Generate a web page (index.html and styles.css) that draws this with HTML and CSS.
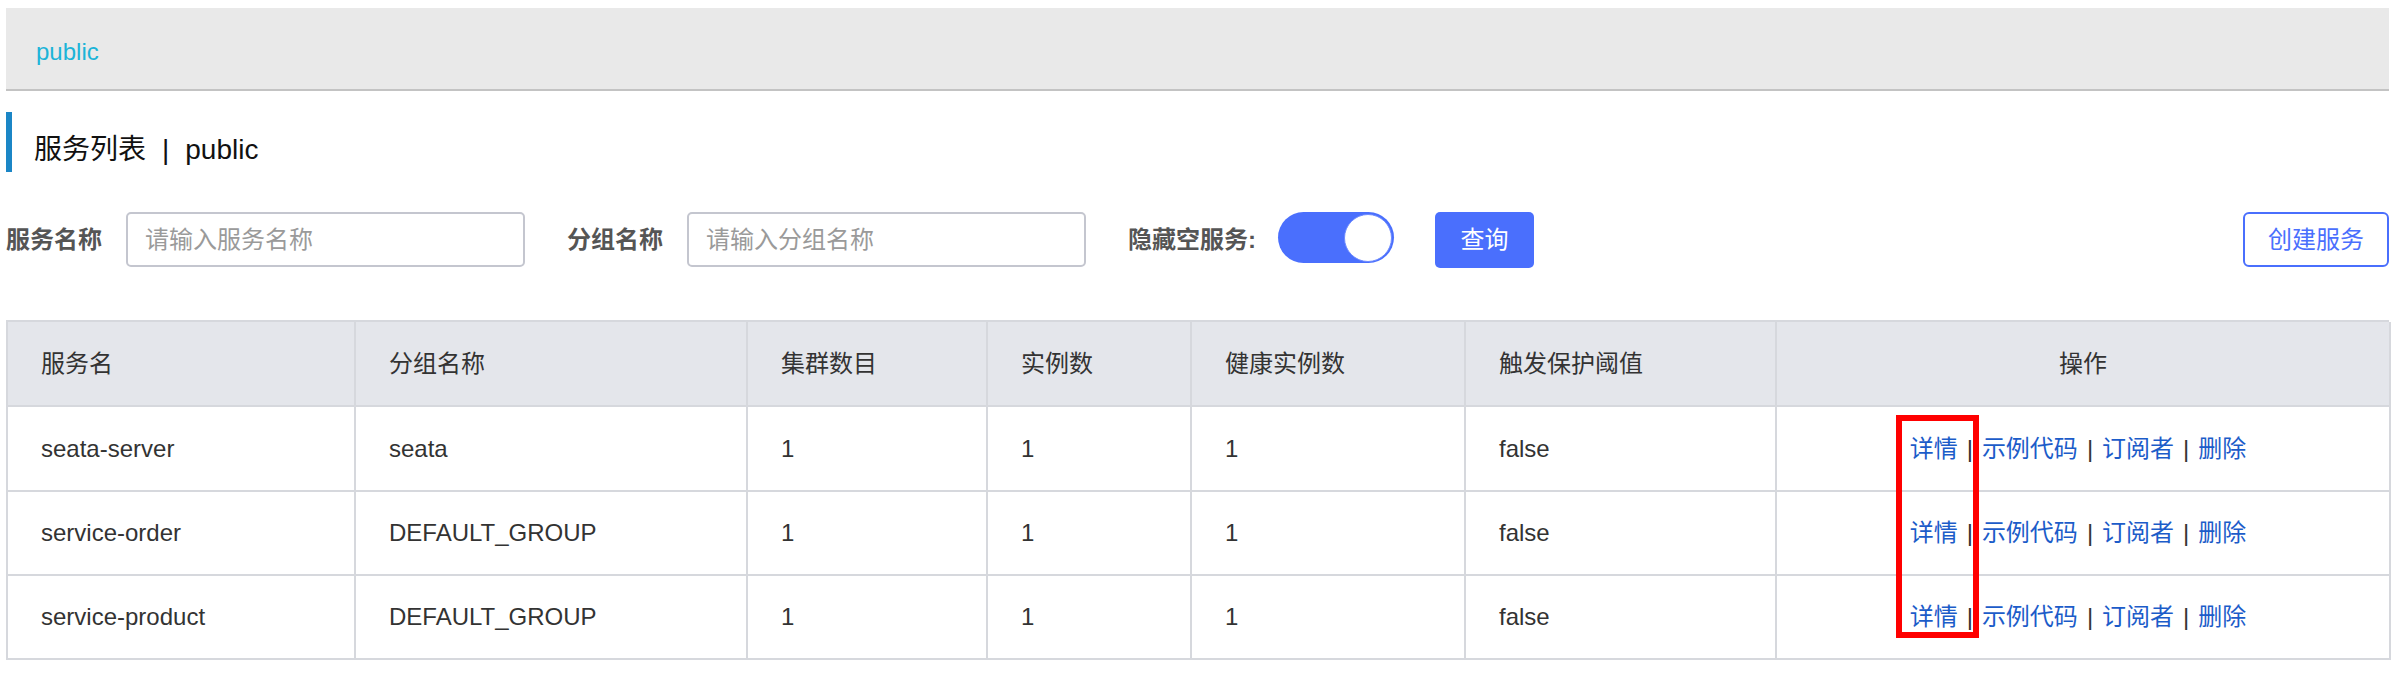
FILE: index.html
```html
<!DOCTYPE html>
<html lang="zh-CN">
<head>
<meta charset="utf-8">
<title>服务列表</title>
<link rel="stylesheet" href="styles.css">
</head>
<body>
<div class="page">
  <div class="ns-bar"><span class="ns-item">public</span></div>

  <h1 class="page-title">服务列表<span class="title-sep">|</span>public</h1>

  <div class="filters">
    <label class="f-label">服务名称</label>
    <input class="f-input" type="text" placeholder="请输入服务名称">
    <label class="f-label">分组名称</label>
    <input class="f-input" type="text" placeholder="请输入分组名称">
    <label class="f-label">隐藏空服务:</label>
    <div class="switch"><span class="knob"></span></div>
    <button class="btn btn-primary">查询</button>
    <button class="btn btn-outline">创建服务</button>
  </div>

  <div class="table">
    <div class="th">服务名</div>
    <div class="th">分组名称</div>
    <div class="th">集群数目</div>
    <div class="th">实例数</div>
    <div class="th">健康实例数</div>
    <div class="th">触发保护阈值</div>
    <div class="th ops">操作</div>

    <div class="td">seata-server</div>
    <div class="td">seata</div>
    <div class="td">1</div>
    <div class="td">1</div>
    <div class="td">1</div>
    <div class="td">false</div>
    <div class="td ops ops-links"><a class="lnk">详情</a><span class="sep">|</span><a class="lnk">示例代码</a><span class="sep">|</span><a class="lnk">订阅者</a><span class="sep">|</span><a class="lnk">删除</a></div>

    <div class="td">service-order</div>
    <div class="td">DEFAULT_GROUP</div>
    <div class="td">1</div>
    <div class="td">1</div>
    <div class="td">1</div>
    <div class="td">false</div>
    <div class="td ops ops-links"><a class="lnk">详情</a><span class="sep">|</span><a class="lnk">示例代码</a><span class="sep">|</span><a class="lnk">订阅者</a><span class="sep">|</span><a class="lnk">删除</a></div>

    <div class="td">service-product</div>
    <div class="td">DEFAULT_GROUP</div>
    <div class="td">1</div>
    <div class="td">1</div>
    <div class="td">1</div>
    <div class="td">false</div>
    <div class="td ops ops-links"><a class="lnk">详情</a><span class="sep">|</span><a class="lnk">示例代码</a><span class="sep">|</span><a class="lnk">订阅者</a><span class="sep">|</span><a class="lnk">删除</a></div>

    <div class="highlight"></div>
  </div>
</div>
</body>
</html>
```

FILE: styles.css
```css
* { box-sizing: border-box; }

body {
  margin: 0;
  background: #ffffff;
  font-family: "Liberation Sans", "Noto Sans CJK SC", sans-serif;
  color: #333333;
}

.page {
  margin-left: 6px;
  width: 2383px;
  padding-top: 8px;
}

.ns-bar {
  height: 83px;
  background: #e9e9e9;
  border-bottom: 2px solid #c3c3c3;
  display: flex;
  align-items: center;
  padding: 6px 0 0 30px;
}

.ns-item {
  font-size: 24px;
  line-height: 30px;
  color: #1cb4d8;
}

.page-title {
  margin: 21px 0 0 0;
  height: 60px;
  border-left: 6px solid #1b86c6;
  padding: 24px 0 0 22px;
  font-size: 28px;
  line-height: 28px;
  font-weight: normal;
  color: #111111;
}

.title-sep {
  margin: 0 16px;
}

.filters {
  margin-top: 40px;
  display: flex;
  align-items: flex-start;
}

.f-label {
  font-size: 24px;
  line-height: 55px;
  font-weight: bold;
  color: #555555;
  margin-right: 24px;
  white-space: nowrap;
}

.f-input {
  width: 399px;
  height: 55px;
  border: 2px solid #c4c6cf;
  border-radius: 5px;
  padding: 0 17px;
  font-family: "Liberation Sans", "Noto Sans CJK SC", sans-serif;
  font-size: 24px;
  color: #333333;
  margin-right: 42px;
  outline: none;
}

.f-input::placeholder {
  color: #9a9a9a;
}

.switch {
  width: 116px;
  height: 51px;
  border-radius: 26px;
  background: #4a6ffd;
  display: flex;
  justify-content: flex-end;
  align-items: center;
  padding-right: 2px;
  margin-right: 41px;
  margin-left: -2px;
}

.knob {
  width: 48px;
  height: 48px;
  border-radius: 50%;
  background: #ffffff;
  border: 1px solid #6f8cff;
}

.btn {
  font-family: "Liberation Sans", "Noto Sans CJK SC", sans-serif;
  font-size: 24px;
  line-height: 24px;
  padding: 0;
  cursor: pointer;
}

.btn-primary {
  width: 99px;
  height: 56px;
  border: none;
  border-radius: 5px;
  background: #4a6ffd;
  color: #ffffff;
}

.btn-outline {
  margin-left: auto;
  width: 146px;
  height: 55px;
  border: 2px solid #4a6ffd;
  border-radius: 6px;
  background: #ffffff;
  color: #4a6ffd;
}

.table {
  position: relative;
  margin-top: 52px;
  display: grid;
  grid-template-columns: 348px 392px 240px 204px 274px 311px 614px;
  grid-template-rows: 85px 85px 84px 84px;
  border-top: 2px solid #d6d8dd;
  border-left: 2px solid #d6d8dd;
}

.th, .td {
  border-right: 2px solid #d6d8dd;
  border-bottom: 2px solid #d6d8dd;
  display: flex;
  align-items: center;
  padding-left: 33px;
  font-size: 24px;
  line-height: 30px;
  color: #333333;
  white-space: nowrap;
}

.th {
  background: #e4e6eb;
}

.ops {
  justify-content: center;
  padding-left: 0;
}

.ops-links {
  padding-right: 10px;
}

.lnk {
  color: #1c5cc9;
  text-decoration: none;
  cursor: pointer;
}

.sep {
  margin: 0 9px;
  color: #333333;
}

.highlight {
  position: absolute;
  left: 1888px;
  top: 93px;
  width: 83px;
  height: 223px;
  border: 6px solid #ff0000;
  pointer-events: none;
}
```
